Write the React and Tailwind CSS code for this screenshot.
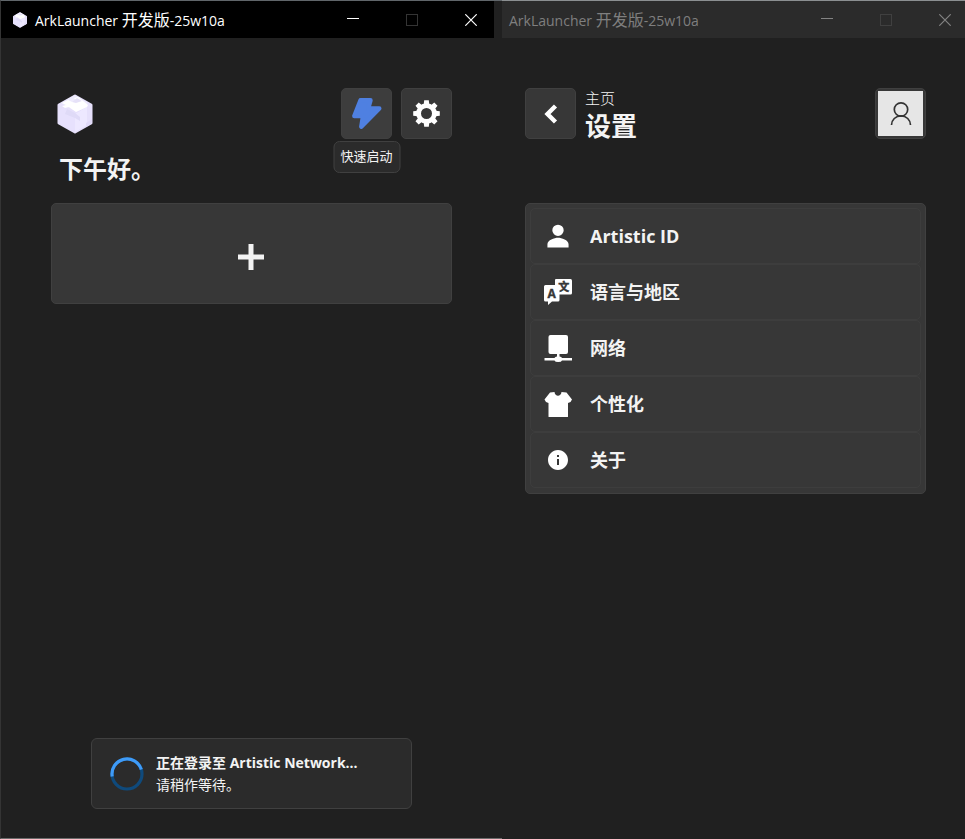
import React from "react";
import { IoPersonSharp } from "react-icons/io5";
import { MdInfo } from "react-icons/md";

function Cube({ className }) {
  return (
    <svg viewBox="0 0 36 40" className={className} aria-hidden="true">
      <path
        d="M18 2 L34 11 V29 L18 38 L2 29 V11 Z"
        fill="#e6e0fb"
        stroke="#e6e0fb"
        strokeWidth="3"
        strokeLinejoin="round"
      />
      <path d="M18 1 L31 9 L18 17 L4 9 Z" fill="#eeebfd" />
      <path d="M18 20 L30 13 V31 L18 38 Z" fill="#ede8ff" />
      <path d="M2 17 L6 14 L18 20 V38 L2 29 Z" fill="#e7e1fd" />
      <path d="M10 15 L18 19 L23 23 V27 L18 24 L8 20 Z" fill="#dfdaf7" />
      <path d="M5 9 L11 6 L15 8 L19 6 L17 4 L21 3 L31 11 L30 13 L19 18 L12 13 L8 14 L5 12 L9 11 Z" fill="#ffffff" />
      <path d="M20 4 L25 7 L19 9 L15 8 Z" fill="#e6e1f8" />
      <path d="M29 29 L35 25 V29 L29 33 Z" fill="#e0d9f8" />
    </svg>
  );
}

function Bolt() {
  return (
    <svg viewBox="0 0 30 31" className="h-[31px] w-[30px]" aria-hidden="true">
      <path
        d="M8.500 2.300 H18.500 L16.200 10.500 H27.300 L9.300 28.700 L11 18 H2.300 Z"
        fill="#4f80e1"
        stroke="#4f80e1"
        strokeWidth="4.400"
        strokeLinejoin="round"
      />
    </svg>
  );
}

const TEETH = [0, 45, 90, 135, 180, 225, 270, 315];

function Gear() {
  return (
    <svg viewBox="0 0 27 27" className="size-[27px]" aria-hidden="true">
      <circle cx="13.500" cy="13.500" r="7.900" fill="none" stroke="#fff" strokeWidth="4.800" />
      {TEETH.map((a) => (
        <path key={a} d="M10.700 4.500 L11.200 0.200 H15.800 L16.300 4.500 Z" fill="#fff" transform={`rotate(${a} 13.500 13.500)`} />
      ))}
    </svg>
  );
}

function Language() {
  return (
    <svg viewBox="0 0 28 28" className="size-7" aria-hidden="true">
      <path d="M12 1 H26.500 Q28 1 28 2.500 V15 Q28 16.500 26.500 16.500 H12 Q11 16.500 11 15.500 V2 Q11 1 12 1 Z" fill="#fff" />
      <text x="19.700" y="13" textAnchor="middle" fontSize="11" fontWeight="700" fill="#373737" stroke="#373737" strokeWidth="0.500" className="font-['Noto_Sans_CJK_SC',sans-serif]">
        文
      </text>
      <path d="M1.500 7 H14 Q15.500 7 15.500 8.500 V22 Q15.500 23.500 14 23.500 H8 L4 27 V23.500 H1.500 Q0 23.500 0 22 V8.500 Q0 7 1.500 7 Z" fill="#fff" />
      <text x="7.700" y="19.500" textAnchor="middle" fontSize="12" fontWeight="700" fill="#373737" stroke="#373737" strokeWidth="0.400" className="font-['Open_Sans',sans-serif]">
        A
      </text>
    </svg>
  );
}

function Network() {
  return (
    <svg viewBox="0 0 28 28" className="size-7" fill="#fff" aria-hidden="true">
      <rect x="4.500" y="1" width="19.500" height="19" rx="2" />
      <path d="M13 19 H15.500 V22.500 Q17.500 22.500 18 24 H28 V26.500 H18 Q17.500 28 14.200 28 Q11 28 10.500 26.500 H0.500 V24 H10.500 Q11 22.500 13 22.500 Z" />
    </svg>
  );
}

function Shirt() {
  return (
    <svg viewBox="0 0 28 28" className="size-7" fill="#fff" aria-hidden="true">
      <path d="M6 2.500 L10.500 2 C11 7 17 7 17.500 2 L22.500 2.500 L28 9.500 L26.500 12 L24 13 V26.500 Q24 27 23.500 27 H5 Q4.500 27 4.500 26.500 V13 L2 12 L0.500 9.500 Z" />
    </svg>
  );
}

function AppTitle() {
  return (
    <span className="text-sm">
      ArkLauncher <span className="text-base">开发版</span>-25w10a
    </span>
  );
}

function WindowControls({ color, muted }) {
  const cls = "flex h-full w-10 items-center justify-center";
  return (
    <div className="flex h-full gap-[19px]">
      <button type="button" aria-label="最小化" className={cls}>
        <svg viewBox="0 0 12 12" className="size-3" shapeRendering="crispEdges"><path d="M0 4.500 H12" stroke={color} /></svg>
      </button>
      <button type="button" aria-label="最大化" className={cls} disabled>
        <svg viewBox="0 0 12 12" className="size-3" shapeRendering="crispEdges"><rect x="0.500" y="0.500" width="11" height="11" fill="none" stroke={muted} /></svg>
      </button>
      <button type="button" aria-label="关闭" className={cls}>
        <svg viewBox="0 0 12 12" className="size-3"><path d="M0.300 0.300 L11.700 11.700 M11.700 0.300 L0.300 11.700" stroke={color} strokeWidth="1.200" /></svg>
      </button>
    </div>
  );
}

const TILE = "flex size-[51px] items-center justify-center rounded-[5px] border border-[#404040] bg-[#373737]";
const TILE_ACTIVE = "flex size-[51px] items-center justify-center rounded-[5px] border border-[#404040] bg-[#3d3d3d]";

const SETTINGS = [
  { label: "Artistic ID", icon: <IoPersonSharp className="size-[26px]" /> },
  { label: "语言与地区", icon: <Language /> },
  { label: "网络", icon: <Network /> },
  { label: "个性化", icon: <Shirt /> },
  { label: "关于", icon: <MdInfo className="size-6" /> },
];

function HomeWindow() {
  return (
    <section className="flex flex-col border-t border-b border-l border-t-[#60666a] border-b-[#6b6b6b] border-l-[#343434]">
      <header className="mr-2 flex h-[37px] items-center justify-between bg-black pr-[3px] pl-[11px] text-white">
        <div className="flex items-center gap-[7px]">
          <Cube className="size-4" />
          <AppTitle />
        </div>
        <WindowControls color="#ffffff" muted="#343434" />
      </header>
      <main className="flex grow flex-col px-[50px] pt-[50px] pb-[29px]">
        <div className="flex items-start justify-between">
          <div className="flex h-[51px] w-12 items-center justify-center">
            <Cube className="h-10 w-9" />
          </div>
          <div className="flex gap-[9px]">
            <div className="relative">
              <button type="button" aria-describedby="tip" aria-label="快速启动" className={TILE_ACTIVE}>
                <Bolt />
              </button>
              <div
                id="tip"
                role="tooltip"
                className="absolute top-full left-1/2 mt-0.5 flex h-8 w-[67px] -translate-x-1/2 items-center justify-center rounded-md border border-[#404040] bg-[#2b2b2b] text-[13px] whitespace-nowrap"
              >
                快速启动
              </div>
            </div>
            <button type="button" aria-label="设置" className={TILE}>
              <Gear />
            </button>
          </div>
        </div>
        <h1 className="mt-3 pl-2 text-2xl leading-9 font-bold">下午好。</h1>
        <button
          type="button"
          aria-label="添加"
          className="mt-4 flex h-[101px] w-full items-center justify-center rounded-[5px] border border-[#404040] bg-[#373737]"
        >
          <svg viewBox="0 0 27 26" className="mt-1.5 h-[26px] w-[27px]" fill="#f3f3f3" aria-hidden="true">
            <path d="M10.500 0 H15.500 V10.500 H26 V15.500 H15.500 V26 H10.500 V15.500 H0 V10.500 H10.500 Z" />
          </svg>
        </button>
        <div
          role="status"
          className="mx-10 mt-auto flex h-[71px] items-center gap-3 rounded-md border border-[#404040] bg-[#2b2b2b] px-[18px]"
        >
          <svg viewBox="0 0 34 34" className="size-[34px]" fill="none" strokeWidth="3.200" aria-hidden="true">
            <circle cx="17" cy="17" r="15" stroke="#0f4a7c" />
            <path d="M2.200 19.500 A15 15 0 0 1 31.300 12.500" stroke="#3f9bf7" />
          </svg>
          <div className="text-sm leading-[22px]">
            <p className="font-bold">正在登录至 Artistic Network...</p>
            <p>请稍作等待。</p>
          </div>
        </div>
      </main>
    </section>
  );
}

function SettingsWindow() {
  return (
    <section className="flex flex-col border-t border-[#8b8f91]">
      <header className="flex h-[37px] items-center justify-between bg-[#2b2b2b] pl-[7px] text-[#7f7f7f]">
        <AppTitle />
        <WindowControls color="#838383" muted="#404040" />
      </header>
      <main className="grow pt-[50px] pr-[39px] pl-[23px]">
        <div className="flex items-start">
          <button type="button" aria-label="返回" className={TILE}>
            <svg viewBox="0 0 14 20" className="h-5 w-3.5" fill="none" aria-hidden="true">
              <path d="M11.500 2 L3.500 10 L11.500 18" stroke="#fff" strokeWidth="4.400" />
            </svg>
          </button>
          <div className="ml-[9px]">
            <p className="text-[15px] leading-5 font-light">主页</p>
            <h1 className="mt-0.5 text-[26px] leading-8 font-bold">设置</h1>
          </div>
          <button
            type="button"
            aria-label="账户"
            className="ml-auto size-[51px] rounded-[5px] border border-[#404040] bg-[#373737] p-0.5"
          >
            <span className="flex size-full items-center justify-center bg-[#e6e6e6]">
              <svg viewBox="0 0 22 26" className="h-[26px] w-[22px]" fill="none" stroke="#333" strokeWidth="1.700" aria-hidden="true">
                <circle cx="11" cy="8.500" r="6.700" />
                <path d="M1.500 24 A9.500 9.200 0 0 1 20.500 24" />
              </svg>
            </span>
          </button>
        </div>
        <ul className="mt-[61px] rounded-[5px] border border-[#404040] bg-[#373737] px-1 pt-1 pb-[5px]">
          {SETTINGS.map((s) => (
            <li key={s.label}>
              <button
                type="button"
                className="flex h-14 w-full items-center rounded-[5px] border border-[#3d3d3d] text-left text-lg font-bold"
              >
                <span className="ml-[13px] flex w-7 justify-center text-white">{s.icon}</span>
                <span className="ml-[18px]">{s.label}</span>
              </button>
            </li>
          ))}
        </ul>
      </main>
    </section>
  );
}

export default function App() {
  return (
    <div
      lang="zh-CN"
      className="grid min-h-screen grid-cols-[502fr_463fr] bg-[#202020] font-['Open_Sans','Noto_Sans_CJK_SC',sans-serif] text-[#f3f3f3]"
    >
      <HomeWindow />
      <SettingsWindow />
    </div>
  );
}
